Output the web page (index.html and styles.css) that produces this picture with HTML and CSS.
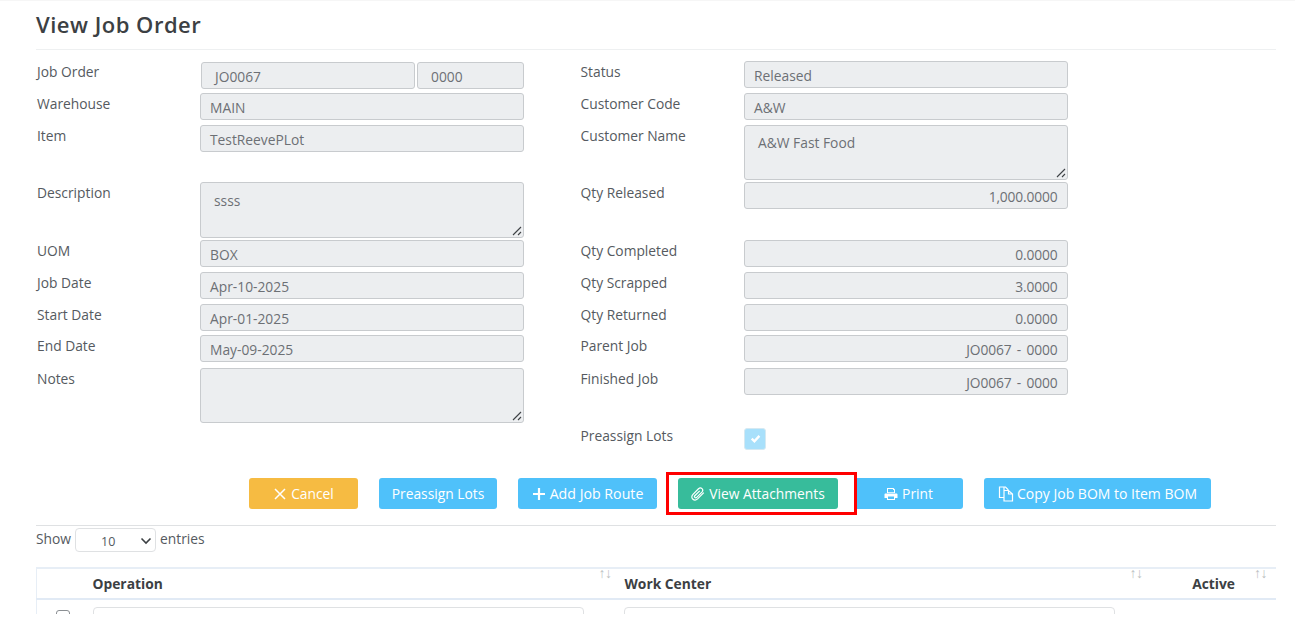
FILE: index.html
```html
<!DOCTYPE html>
<html lang="en">
<head>
<meta charset="utf-8">
<title>View Job Order</title>
<link rel="stylesheet" href="styles.css">
</head>
<body>
<main class="page">
  <h1 class="title">View Job Order</h1>
  <div class="form">
    <div class="col col-left">
      <div class="row row-first"><label>Job Order</label>
        <div class="split"><div class="field pad-wide grow">JO0067</div><div class="field pad-wide part">0000</div></div></div>
      <div class="row"><label>Warehouse</label><div class="field">MAIN</div></div>
      <div class="row row-gap"><label>Item</label><div class="field">TestReevePLot</div></div>
      <div class="row row-tall"><label>Description</label><div class="field area">ssss<svg class="grip" viewBox="0 0 10 10"><path d="M1 9 9 1M6 9 9 6"/></svg></div></div>
      <div class="row"><label>UOM</label><div class="field">BOX</div></div>
      <div class="row"><label>Job Date</label><div class="field">Apr-10-2025</div></div>
      <div class="row row-short"><label>Start Date</label><div class="field">Apr-01-2025</div></div>
      <div class="row row-long"><label>End Date</label><div class="field">May-09-2025</div></div>
      <div class="row row-tall row-notes"><label>Notes</label><div class="field area"><svg class="grip" viewBox="0 0 10 10"><path d="M1 9 9 1M6 9 9 6"/></svg></div></div>
    </div>
    <div class="col col-right">
      <div class="row"><label>Status</label><div class="field">Released</div></div>
      <div class="row"><label>Customer Code</label><div class="field">A&amp;W</div></div>
      <div class="row row-tall row-name"><label>Customer Name</label><div class="field area">A&amp;W Fast Food<svg class="grip" viewBox="0 0 10 10"><path d="M1 9 9 1M6 9 9 6"/></svg></div></div>
      <div class="row row-gap-r"><label>Qty Released</label><div class="field num">1,000.0000</div></div>
      <div class="row"><label>Qty Completed</label><div class="field num">0.0000</div></div>
      <div class="row"><label>Qty Scrapped</label><div class="field num">3.0000</div></div>
      <div class="row row-short"><label>Qty Returned</label><div class="field num">0.0000</div></div>
      <div class="row row-long"><label>Parent Job</label><div class="field num">JO0067 - 0000</div></div>
      <div class="row"><label>Finished Job</label><div class="field num">JO0067 - 0000</div></div>
      <div class="row row-check"><label>Preassign Lots</label>
        <span class="check"><svg viewBox="0 0 12 12"><path d="M2.5 6.2 5 8.6 9.6 3.6"/></svg></span></div>
    </div>
  </div>
  <div class="actions">
    <button class="btn warn b-cancel"><svg class="ico" viewBox="0 0 14 14"><path class="ln" d="M2 2 12 12M12 2 2 12"/></svg>Cancel</button>
    <button class="btn info b-lots">Preassign Lots</button>
    <button class="btn info b-route"><svg class="ico" viewBox="0 0 14 14"><path class="ln thick" d="M7 1V13M1 7H13"/></svg>Add Job Route</button>
    <span class="mark"><button class="btn ok b-view"><svg class="ico" viewBox="0 0 14 14"><path class="ln thin" d="M12.800 5.600 6.600 11.900C5.100 13.300 3 13.300 1.700 12 .4 10.700.6 8.700 2 7.300L7.500 1.800C8.600.8 10.100.8 11 1.700 12 2.700 11.900 4.100 10.900 5.100L5.700 10.300C5.100 10.900 4.300 10.900 3.800 10.400 3.300 9.900 3.400 9.100 4 8.500L8.700 3.800"/></svg>View Attachments</button></span>
    <button class="btn info b-print"><svg class="ico" viewBox="0 0 14 14"><path class="fill" d="M3 1h6.500L11 2.500V6H3zM4 2v3.200h6V3H9V2zM1.500 6.500h11c.5 0 1 .4 1 1V11H11v2H3v-2H.5V7.500c0-.6.5-1 1-1zM4 9.500V12h6V9.500z" fill-rule="evenodd"/></svg>Print</button>
    <button class="btn info b-copy"><svg class="ico ico-copy" viewBox="0 0 16 16"><path class="ln thin" d="M6 4.500V1H1.500V11.500H6M6 4.500H10.500L14.500 8V15H6ZM6 1H7.500L10 3.500V4.500M10.500 4.500V8H14.500"/></svg>Copy Job BOM to Item BOM</button>
  </div>
  <div class="length">Show
    <span class="select">10<svg viewBox="0 0 12 8"><path d="M1.500 1.500 6 6 10.500 1.500"/></svg></span>
    entries</div>
  <table class="grid">
    <thead>
      <tr>
        <th class="c-check"></th>
        <th class="c-op">Operation<span class="sort sort-op">↑↓</span></th>
        <th class="c-wc">Work Center<span class="sort sort-wc">↑↓</span></th>
        <th class="c-active">Active<span class="sort">↑↓</span></th>
      </tr>
    </thead>
    <tbody>
      <tr>
        <td class="c-check"><span class="box"></span></td>
        <td class="c-op"><span class="cell-input"></span></td>
        <td class="c-wc"><span class="cell-input"></span></td>
        <td class="c-active"></td>
      </tr>
    </tbody>
  </table>
</main>
</body>
</html>
```
FILE: styles.css
```css
* { box-sizing: border-box; }
html, body { margin: 0; height: 100%; overflow: hidden; background: #fff; }
body { font-family: "Open Sans", "Noto Sans", sans-serif; font-size: 13.800px; color: #555a60; }
.page { padding: 0 19px 0 36px; height: 614px; overflow: hidden; border-top: 1px solid #f6f6f6; }
.title { margin: 0; height: 49px; padding-top: 7px; font-size: 22px; line-height: 33px; font-weight: 600; color: #3c4043; border-bottom: 1px solid #eef0f1; letter-spacing: .5px; }
.form { display: flex; margin-top: 11px; height: 404px; }
.col { flex: none; }
.col-left { width: 488px; margin-right: 56px; }
.col-right { width: 487.500px; }
.row { display: flex; height: 27px; margin-bottom: 5px; }
.row label { width: 164px; flex: none; padding-left: 1px; line-height: 22px; }
.col-right .row label { padding-left: .5px; }
.col-left .row-first { margin-top: 1px; margin-bottom: 4px; }
.col-left .row-first label { margin-top: -1px; }
.row-gap { margin-bottom: 30px; }
.row-gap-r { margin-bottom: 31px; }
.row-tall { height: 56px; margin-bottom: 2px; }
.row-name { height: 55px; margin-bottom: 2px; }
.row-short { margin-bottom: 4px; }
.row-long { margin-bottom: 6px; }
.row-notes { height: 55px; }
.row-check { margin-top: 30px; height: 27px; align-items: center; }
.row-check label { align-self: flex-start; }
.field { flex: 1; min-width: 0; position: relative; height: 100%; padding: 1.500px 9px 0; line-height: 23px; background: #eceef0; border: 1px solid #c8cbce; border-radius: 3px; color: #6c7075; white-space: nowrap; }
.split { flex: 1; display: flex; gap: 2px; margin-left: 1px; }
.grow { flex: 1; }
.part { flex: none; width: 107px; }
.pad-wide { padding-left: 13px; }
.area { padding: 6px 13px 0; }
.row-name .area { padding-top: 5px; }
.num { text-align: right; padding-right: 9px; letter-spacing: -.15px; word-spacing: 2px; }
.grip { position: absolute; right: 1px; bottom: 1px; width: 10px; height: 10px; fill: none; stroke: #3f4346; stroke-width: 1.100; }
.check { width: 22px; height: 22px; border-radius: 3px; background: #a8e0fb; border: 1px solid #d5e9f2; display: flex; align-items: center; justify-content: center; }
.check svg { width: 13px; height: 13px; fill: none; stroke: #fff; stroke-width: 2.200; }
.actions { display: flex; align-items: center; height: 61px; padding: 13px 0 16px; border-bottom: 1px solid #dfe1e3; }
.btn { height: 31px; border: 0; padding: 0; border-radius: 3px; font: 500 13.800px "Open Sans", "Noto Sans", sans-serif; color: #fff; display: inline-flex; align-items: center; justify-content: center; gap: 4px; white-space: nowrap; }
.warn { background: #f6bb42; }
.info { background: #4fc1fa; }
.ok { background: #37bc9b; }
.ico { width: 14px; height: 14px; flex: none; }
.ln { fill: none; stroke: #fff; stroke-width: 1.500; }
.thick { stroke-width: 2.200; }
.thin { stroke-width: 1.200; }
.fill { fill: #fff; }
.ico-copy { width: 16px; height: 16px; margin-right: -1px; }
.b-cancel { width: 109px; margin-left: 213px; }
.b-lots { width: 118px; margin-left: 21px; }
.b-route { width: 139px; margin-left: 21px; font-size: 14.200px; }
.mark { margin-left: 9px; width: 191px; height: 43px; flex: none; border: 3px solid #f00; display: flex; align-items: center; padding-left: 9px; position: relative; z-index: 1; }
.b-view { width: 160px; flex: none; }
.b-print { width: 109px; margin-left: -3px; }
.b-copy { width: 227px; margin-left: 21px; font-size: 14px; }
.length { display: flex; align-items: center; gap: 4px; height: 25px; }
.select { width: 81px; height: 24px; position: relative; margin-top: 3px; padding: 3px 0 0 25px; line-height: 20px; border: 1px solid #dfe1e3; border-radius: 4px; font-size: 12.500px; }
.select svg { position: absolute; right: 3px; top: 8px; width: 12px; height: 8px; fill: none; stroke: #3c4043; stroke-width: 1.600; }
.grid { width: 100%; margin-top: 16px; border-collapse: collapse; table-layout: fixed; color: #3c4043; }
.grid th { height: 31px; padding: 0 0 1px; text-align: left; font-weight: 700; font-size: 13.800px; position: relative; border-top: 2px solid #e7eef6; border-bottom: 2px solid #e1eaf5; }
.grid th.c-check, .grid td.c-check { border-left: 1px solid #e7eef6; }
.sort { position: absolute; right: 9px; top: -3px; font-family: "Liberation Sans", sans-serif; font-size: 14px; line-height: 14px; font-weight: 400; color: #bcbfc2; letter-spacing: -.5px; }
.sort-op { right: 12px; }
.sort-wc { right: 7px; }
.c-check { width: 56px; }
.c-op { width: 531px; }
.c-wc { width: 526px; }
.grid th.c-wc { padding-left: 1px; }
.grid th.c-active { padding-right: 41px; text-align: right; }
.grid td { padding: 7px 0 0; vertical-align: top; }
.box { display: block; width: 14px; height: 14px; margin: 3px 0 0 19px; border: 1px solid #8b8f93; border-radius: 3px; }
.cell-input { display: block; width: 491px; height: 30px; border: 1px solid #dfe1e3; border-radius: 4px; }
```
